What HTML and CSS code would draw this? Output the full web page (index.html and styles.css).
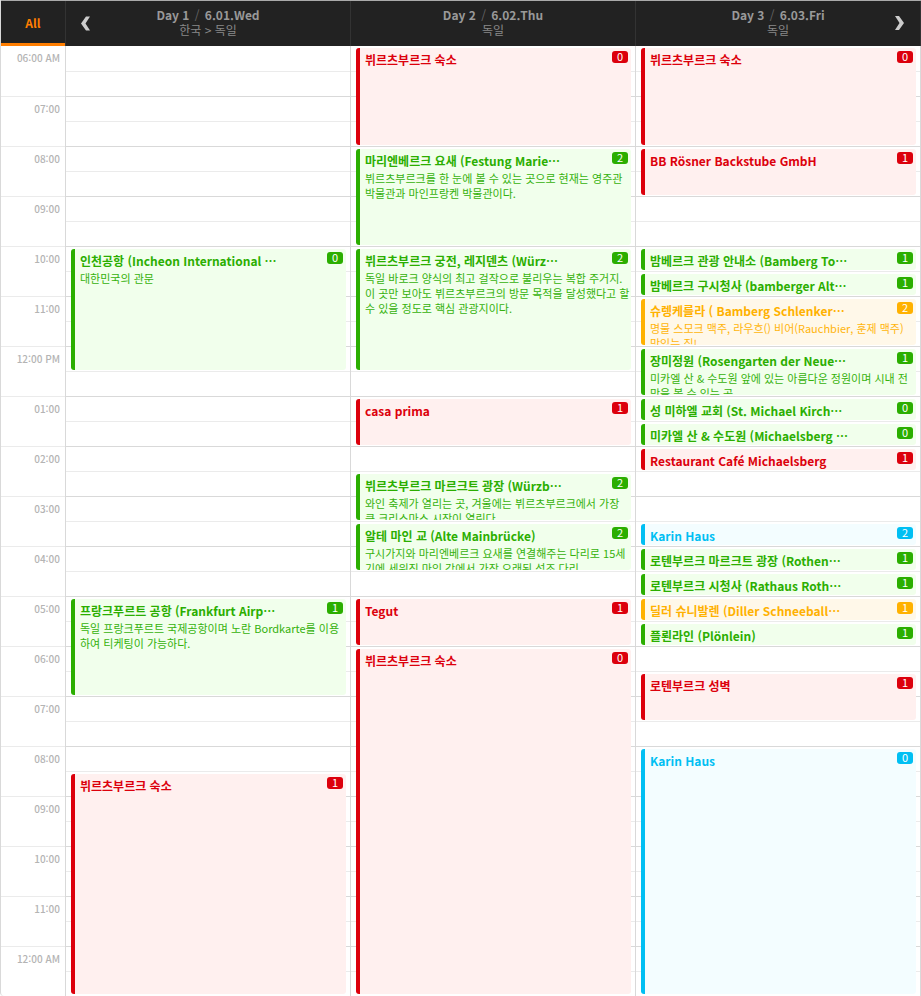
FILE: index.html
```html
<!DOCTYPE html>
<html lang="ko">
<head>
<meta charset="utf-8">
<title>여행 일정표</title>
<link rel="stylesheet" href="styles.css">
</head>
<body>
<main class="planner">
  <header class="planner-head">
    <button class="all" type="button">All</button>
    <div class="day-head">
      <button class="nav nav-prev" type="button" aria-label="이전"><svg width="9" height="15" viewBox="0 0 9 15"><path d="M5 0.500H9L4.500 7.500L9 14.500H5L0 7.500Z"/></svg></button>
      <h2>Day 1 <i>/</i> 6.01.Wed</h2>
      <p>한국 &gt; 독일</p>
    </div>
    <div class="day-head">
      <h2>Day 2 <i>/</i> 6.02.Thu</h2>
      <p>독일</p>
    </div>
    <div class="day-head">
      <h2>Day 3 <i>/</i> 6.03.Fri</h2>
      <p>독일</p>
      <button class="nav nav-next" type="button" aria-label="다음"><svg width="9" height="15" viewBox="0 0 9 15"><path d="M0 0H4L9 7L4 14H0L4.500 7Z"/></svg></button>
    </div>
  </header>
  <div class="planner-body">
    <ol class="hours">
      <li>06:00 AM</li><li>07:00</li><li>08:00</li><li>09:00</li><li>10:00</li><li>11:00</li><li>12:00 PM</li><li>01:00</li><li>02:00</li><li>03:00</li><li>04:00</li><li>05:00</li><li>06:00</li><li>07:00</li><li>08:00</li><li>09:00</li><li>10:00</li><li>11:00</li><li>12:00 AM</li>
    </ol>
    <section class="day">
      <article class="event green" style="grid-row: 9 / span 5"><h3>인천공항 (Incheon International …</h3><p>대한민국의 관문</p><span class="badge">0</span></article>
      <article class="event green" style="grid-row: 23 / span 4"><h3>프랑크푸르트 공항 (Frankfurt Airp…</h3><p>독일 프랑크푸르트 국제공항이며 노란 Bordkarte를 이용하여 티케팅이 가능하다.</p><span class="badge">1</span></article>
      <article class="event red" style="grid-row: 30 / span 9"><h3>뷔르츠부르크 숙소</h3><span class="badge">1</span></article>
    </section>
    <section class="day">
      <article class="event red" style="grid-row: 1 / span 4"><h3>뷔르츠부르크 숙소</h3><span class="badge">0</span></article>
      <article class="event green" style="grid-row: 5 / span 4"><h3>마리엔베르크 요새 (Festung Marie…</h3><p>뷔르츠부르크를 한 눈에 볼 수 있는 곳으로 현재는 영주관 박물관과 마인프랑켄 박물관이다.</p><span class="badge">2</span></article>
      <article class="event green" style="grid-row: 9 / span 5"><h3>뷔르츠부르크 궁전, 레지덴츠 (Würz…</h3><p>독일 바로크 양식의 최고 걸작으로 불리우는 복합 주거지. 이 곳만 보아도 뷔르츠부르크의 방문 목적을 달성했다고 할 수 있을 정도로 핵심 관광지이다.</p><span class="badge">2</span></article>
      <article class="event red" style="grid-row: 15 / span 2"><h3>casa prima</h3><span class="badge">1</span></article>
      <article class="event green" style="grid-row: 18 / span 2"><h3>뷔르츠부르크 마르크트 광장 (Würzb…</h3><p>와인 축제가 열리는 곳, 겨울에는 뷔르츠부르크에서 가장 큰 크리스마스 시장이 열린다.</p><span class="badge">2</span></article>
      <article class="event green" style="grid-row: 20 / span 2"><h3>알테 마인 교 (Alte Mainbrücke)</h3><p>구시가지와 마리엔베르크 요새를 연결해주는 다리로 15세기에 세워진 마인 강에서 가장 오래된 석조 다리.</p><span class="badge">2</span></article>
      <article class="event red" style="grid-row: 23 / span 2"><h3>Tegut</h3><span class="badge">1</span></article>
      <article class="event red" style="grid-row: 25 / span 14"><h3>뷔르츠부르크 숙소</h3><span class="badge">0</span></article>
    </section>
    <section class="day">
      <article class="event red" style="grid-row: 1 / span 4"><h3>뷔르츠부르크 숙소</h3><span class="badge">0</span></article>
      <article class="event red" style="grid-row: 5 / span 2"><h3>BB Rösner Backstube GmbH</h3><span class="badge">1</span></article>
      <article class="event green" style="grid-row: 9 / span 1"><h3>밤베르크 관광 안내소 (Bamberg To…</h3><span class="badge">1</span></article>
      <article class="event green" style="grid-row: 10 / span 1"><h3>밤베르크 구시청사 (bamberger Alt…</h3><span class="badge">1</span></article>
      <article class="event amber" style="grid-row: 11 / span 2"><h3>슈렝케를라 ( Bamberg Schlenker…</h3><p>명물 스모크 맥주, 라우흐() 비어(Rauchbier, 훈제 맥주) 맛있는 집!</p><span class="badge">2</span></article>
      <article class="event green" style="grid-row: 13 / span 2"><h3>장미정원 (Rosengarten der Neue…</h3><p>미카엘 산 &amp; 수도원 앞에 있는 아름다운 정원이며 시내 전망을 볼 수 있는 곳</p><span class="badge">1</span></article>
      <article class="event green" style="grid-row: 15 / span 1"><h3>성 미하엘 교회 (St. Michael Kirch…</h3><span class="badge">0</span></article>
      <article class="event green" style="grid-row: 16 / span 1"><h3>미카엘 산 &amp; 수도원 (Michaelsberg …</h3><span class="badge">0</span></article>
      <article class="event red" style="grid-row: 17 / span 1"><h3>Restaurant Café Michaelsberg</h3><span class="badge">1</span></article>
      <article class="event blue" style="grid-row: 20 / span 1"><h3>Karin Haus</h3><span class="badge">2</span></article>
      <article class="event green" style="grid-row: 21 / span 1"><h3>로텐부르크 마르크트 광장 (Rothen…</h3><span class="badge">1</span></article>
      <article class="event green" style="grid-row: 22 / span 1"><h3>로텐부르크 시청사 (Rathaus Roth…</h3><span class="badge">1</span></article>
      <article class="event amber" style="grid-row: 23 / span 1"><h3>딜러 슈니발렌 (Diller Schneeball…</h3><span class="badge">1</span></article>
      <article class="event green" style="grid-row: 24 / span 1"><h3>플뢴라인 (Plönlein)</h3><span class="badge">1</span></article>
      <article class="event red" style="grid-row: 26 / span 2"><h3>로텐부르크 성벽</h3><span class="badge">1</span></article>
      <article class="event blue" style="grid-row: 29 / span 10"><h3>Karin Haus</h3><span class="badge">0</span></article>
    </section>
  </div>
</main>
</body>
</html>
```
FILE: styles.css
```css
* {
  box-sizing: border-box;
  margin: 0;
  padding: 0;
}

body {
  background: #fff;
  font-family: "Noto Sans CJK KR", sans-serif;
  font-size: 12px;
}

button {
  border: 0;
  background: none;
  font: inherit;
  cursor: pointer;
}

.planner {
  border-left: 1px solid #d9d9d9;
  border-bottom-left-radius: 4px;
}

.planner-head,
.planner-body {
  display: grid;
  grid-template-columns: 65px repeat(3, 1fr);
}

.planner-head {
  height: 46px;
  border-top: 1px solid #aaa;
  background: #222;
}

.all {
  padding-bottom: 2px;
  border-right: 1px solid #333;
  box-shadow: inset 0 -3px #ff7e00;
  color: #ff7e00;
  font-weight: 700;
}

.day-head {
  position: relative;
  padding-top: 6px;
  border-right: 1px solid #333;
  color: #888;
  line-height: 15px;
  text-align: center;
}

.day-head h2 {
  color: #999;
  font-size: 12px;
  font-weight: 700;
}

.day-head i {
  margin: 0 2px;
  color: #666;
  font-style: normal;
  font-weight: 400;
}

.nav {
  position: absolute;
  top: 8px;
  width: 29px;
  height: 29px;
}

.nav svg {
  display: block;
  margin: 0 auto;
  fill: #ccc;
}

.nav-prev {
  left: 5px;
}

.nav-next {
  right: 6px;
}

.hours {
  border-right: 1px solid #d9d9d9;
  list-style: none;
}

.hours li {
  height: 50px;
  padding: 4px 5px 0 0;
  border-bottom: 1px solid #ebebeb;
  color: #b4b4b4;
  font-size: 10px;
  font-weight: 500;
  font-feature-settings: "calt" 0;
  line-height: 16px;
  text-align: right;
}

.hours li:first-child {
  height: 51px;
}

.hours li:last-child {
  height: 49px;
  border-bottom: 0;
}

.day {
  display: grid;
  grid-template-rows: 26px repeat(36, 25px) 24px;
  grid-template-columns: minmax(0, 1fr);
  border-right: 1px solid #d9d9d9;
  background:
    linear-gradient(#fff, #fff) 0 0 / 100% 1px no-repeat,
    linear-gradient(transparent 24px, #ebebeb 24px, #ebebeb 25px, transparent 25px, transparent 49px, #d9d9d9 49px) 0 1px / 100% 50px;
}

.event {
  position: relative;
  min-height: 0;
  margin: 2px 4px 2px 5px;
  padding: 3px 0 0 5px;
  border-left: 4px solid;
  border-radius: 3px;
  overflow: hidden;
}

.event h3 {
  font-size: 12px;
  font-weight: 700;
  line-height: 18px;
  white-space: nowrap;
}

.event p {
  margin-top: 1px;
  font-size: 11px;
  line-height: 15px;
  opacity: 0.95;
}

.badge {
  position: absolute;
  top: 3px;
  right: 3px;
  width: 16px;
  height: 12px;
  border-radius: 3px;
  background: currentColor;
  font-size: 11px;
  line-height: 11px;
  text-align: center;
}

.badge::first-letter {
  color: #fff;
}

.green {
  background: #f1ffec;
  color: #2bae00;
}

.red {
  background: #fff0ef;
  color: #dc000c;
}

.amber {
  background: #fff8e9;
  color: #ffb100;
}

.blue {
  background: #f3fdff;
  color: #00bff3;
}
```
